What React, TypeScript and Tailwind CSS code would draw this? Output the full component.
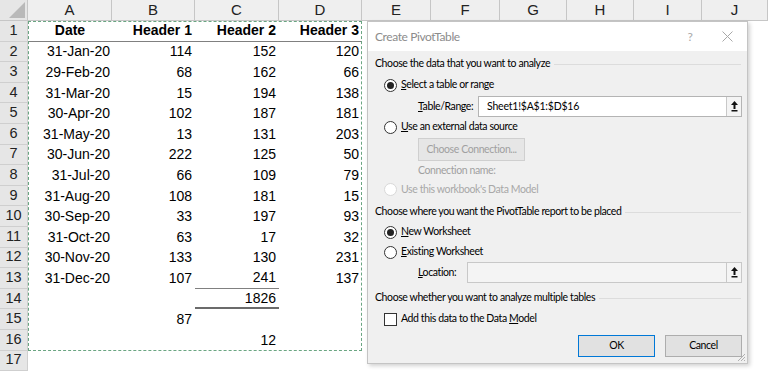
import React from "react";

const cols = ["A", "B", "C", "D", "E", "F", "G", "H", "I", "J"];

type Row = { a?: string; b?: string; c?: string; d?: string; cb?: "thin" | "thick" };

const rows: Row[] = [
    { a: "Date", b: "Header 1", c: "Header 2", d: "Header 3" },
    { a: "31-Jan-20", b: "114", c: "152", d: "120" },
    { a: "29-Feb-20", b: "68", c: "162", d: "66" },
    { a: "31-Mar-20", b: "15", c: "194", d: "138" },
    { a: "30-Apr-20", b: "102", c: "187", d: "181" },
    { a: "31-May-20", b: "13", c: "131", d: "203" },
    { a: "30-Jun-20", b: "222", c: "125", d: "50" },
    { a: "31-Jul-20", b: "66", c: "109", d: "79" },
    { a: "31-Aug-20", b: "108", c: "181", d: "15" },
    { a: "30-Sep-20", b: "33", c: "197", d: "93" },
    { a: "31-Oct-20", b: "63", c: "17", d: "32" },
    { a: "30-Nov-20", b: "133", c: "130", d: "231" },
    { a: "31-Dec-20", b: "107", c: "241", d: "137", cb: "thin" },
    { c: "1826", cb: "thick" },
    { b: "87" },
    { c: "12" },
    {},
];

function Radio({ checked, disabled }: { checked?: boolean; disabled?: boolean }) {
    return (
        <span className={`w-[13px] h-[13px] rounded-full border flex items-center justify-center bg-white shrink-0 ${disabled ? "border-[#d8d8d8]" : "border-[#333]"}`}>
            {checked && <span className="w-[7px] h-[7px] rounded-full bg-[#222]" />}
        </span>
    );
}

function Heading({ text }: { text: string }) {
    return (
        <div className="h-[20px] flex items-center pl-[7px] pr-[6px] gap-[4px]">
            <span className="whitespace-nowrap">{text}</span>
            <span className="flex-1 h-px bg-[#dcdcdc]" />
        </div>
    );
}

function RefButton() {
    return (
        <span className="w-[15px] h-full border-l border-[#c8c8c8] bg-[#f4f4f4] flex items-center justify-center shrink-0">
            <svg width="7" height="11" viewBox="0 0 7 11">
                <path d="M3.5 0 L7 4 H4.5 V8 H2.5 V4 H0 Z" fill="#111" />
                <rect x="0.5" y="9" width="6" height="1.5" fill="#111" />
            </svg>
        </span>
    );
}

export default function App() {
    return (
        <div className="w-[768px] h-[371px] relative overflow-hidden bg-white font-['Liberation_Sans',sans-serif]">
            {/* sheet */}
            <div className="grid grid-cols-[28px_84px_83px_84px_83px_69px_69px_67px_67px_68px_66px]">
                <div className="h-[21px] bg-[#e6e6e6] border-r border-b border-[#c6c6c6] relative">
                    <svg className="absolute right-[2px] bottom-[2px]" width="16" height="16" viewBox="0 0 16 16">
                        <path d="M16 0 V16 H0 Z" fill="#b9b9b9" />
                    </svg>
                </div>
                {cols.map((c) => (
                    <div key={c} className="h-[21px] bg-[#efefef] border-r border-b border-[#c6c6c6] flex items-center justify-center text-[15px] text-[#222]">
                        {c}
                    </div>
                ))}
                {rows.map((r, i) => (
                    <React.Fragment key={i}>
                        <div className="h-[20.6px] bg-[#e6e6e6] border-r border-b border-[#cfcfcf] flex items-center justify-center text-[14.5px] text-[#222]">
                            {i + 1}
                        </div>
                        <div className={`h-[20.6px] flex items-center text-[14px] text-black ${i === 0 ? "justify-center font-bold border-b border-[#808080]" : "justify-end pr-[2px]"}`}>
                            {r.a}
                        </div>
                        <div className={`h-[20.6px] flex items-center justify-end pr-[3px] text-[14px] text-black ${i === 0 ? "font-bold border-b border-[#808080]" : ""}`}>
                            {r.b}
                        </div>
                        <div className={`h-[20.6px] flex items-center justify-end pr-[3px] text-[14px] text-black ${i === 0 ? "font-bold border-b border-[#808080]" : ""} ${r.cb === "thin" ? "border-b border-[#808080]" : ""} ${r.cb === "thick" ? "border-b-[2px] border-[#6b6b6b]" : ""}`}>
                            {r.c}
                        </div>
                        <div className={`h-[20.6px] flex items-center justify-end pr-[3px] text-[14px] text-black ${i === 0 ? "font-bold border-b border-[#808080]" : ""}`}>
                            {r.d}
                        </div>
                        <div /><div /><div /><div /><div /><div />
                    </React.Fragment>
                ))}
            </div>

            {/* copy marquee */}
            <div className="absolute left-[28px] top-[21px] w-[334px] h-[330px] border border-dashed border-[#6aa582]" />

            {/* dialog */}
            <div className="absolute left-[367px] top-[21px] w-[381px] h-[343px] bg-[#f0f0f0] border border-[#c4c4c4] shadow-[2px_2px_4px_rgba(0,0,0,0.18)] text-[10.5px] tracking-[-0.4px] text-black font-['Lato',sans-serif] flex flex-col">
                <div className="h-[29px] bg-white flex items-center pl-[7px] text-[#8c8c8c] text-[12px]">
                    <span className="flex-1">Create PivotTable</span>
                    <span className="w-[20px] text-center mr-[22px] text-[#a8a8a8]">?</span>
                    <svg className="mr-[14px]" width="11" height="11" viewBox="0 0 11 11">
                        <path d="M0.5 0.5 L10.5 10.5 M10.5 0.5 L0.5 10.5" stroke="#a8a8a8" strokeWidth="1" />
                    </svg>
                </div>

                <div className="mt-[3px]"><Heading text="Choose the data that you want to analyze" /></div>
                <div className="mt-[1px] h-[20px] flex items-center pl-[16px] gap-[4px]">
                    <Radio checked />
                    <span><u>S</u>elect a table or range</span>
                </div>
                <div className="mt-[1px] h-[21px] flex items-center pl-[50px] pr-[5px]">
                    <span className="w-[60px] shrink-0 whitespace-nowrap"><u>T</u>able/Range:</span>
                    <div className="flex-1 h-full bg-white border border-[#b4b4b4] flex items-center">
                        <span className="flex-1 pl-[8px] tracking-[-0.2px]">Sheet1!$A$1:$D$16</span>
                        <RefButton />
                    </div>
                </div>
                <div className="h-[20px] flex items-center pl-[16px] gap-[4px]">
                    <Radio />
                    <span><u>U</u>se an external data source</span>
                </div>
                <div className="mt-[1px] pl-[50px]">
                    <div className="w-[107px] h-[23px] border border-[#cfcfcf] bg-[#e6e6e6] text-[#a0a0a0] flex items-center justify-center">
                        Choose Connection...
                    </div>
                </div>
                <div className="mt-[1px] h-[18px] flex items-center pl-[50px] text-[#a0a0a0]">Connection name:</div>
                <div className="h-[19px] flex items-center pl-[16px] gap-[4px] text-[#a8a8a8]">
                    <Radio disabled />
                    <span>Use this workbook's Data Model</span>
                </div>

                <div className="mt-[3px]"><Heading text="Choose where you want the PivotTable report to be placed" /></div>
                <div className="h-[20px] flex items-center pl-[16px] gap-[4px]">
                    <Radio checked />
                    <span><u>N</u>ew Worksheet</span>
                </div>
                <div className="h-[20px] flex items-center pl-[16px] gap-[4px]">
                    <Radio />
                    <span><u>E</u>xisting Worksheet</span>
                </div>
                <div className="h-[21px] flex items-center pl-[50px] pr-[5px]">
                    <span className="w-[49px] shrink-0"><u>L</u>ocation:</span>
                    <div className="flex-1 h-full bg-[#f4f4f4] border border-[#c8c8c8] flex items-center justify-end">
                        <RefButton />
                    </div>
                </div>

                <div className="mt-[5px]"><Heading text="Choose whether you want to analyze multiple tables" /></div>
                <div className="mt-[1px] h-[20px] flex items-center pl-[16px] gap-[4px]">
                    <span className="w-[13px] h-[13px] border border-[#333] bg-white" />
                    <span>Add this data to the Data <u>M</u>odel</span>
                </div>

                <div className="mt-[6px] flex justify-end gap-[10px] pr-[5px]">
                    <div className="w-[77px] h-[22px] border border-[#0078d7] bg-[#e1e1e1] flex items-center justify-center">OK</div>
                    <div className="w-[77px] h-[22px] border border-[#adadad] bg-[#e1e1e1] flex items-center justify-center">Cancel</div>
                </div>
                <svg className="absolute right-[1px] bottom-[1px]" width="10" height="10" viewBox="0 0 10 10">
                    <path d="M9 2 L2 9 M9 5 L5 9 M9 8 L8 9" stroke="#b0b0b0" strokeWidth="1" />
                </svg>
            </div>
        </div>
    );
}
